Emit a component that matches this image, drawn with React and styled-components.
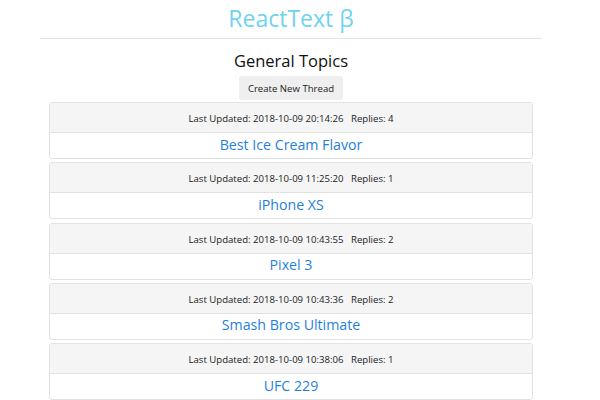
import React from "react";
import styled, { createGlobalStyle } from "styled-components";

const Global = createGlobalStyle`
  html, body { margin: 0; padding: 0; background: #fff; }
  body { font-family: "Segoe UI", "Open Sans", "Noto Sans", sans-serif; color: #212529; }
`;

const Page = styled.div`
  width: 502px;
  margin-left: 40px;
  display: flex;
  flex-direction: column;
  align-items: center;
`;

const Brand = styled.h1`
  margin: 0;
  height: 39px;
  line-height: 36px;
  font-size: 23px;
  font-weight: 400;
  color: #6fd3ee;
  text-align: center;
  width: 100%;
  border-bottom: 1px solid #e4e4e4;
  box-sizing: border-box;
`;

const Heading = styled.h2`
  margin: 9px 0 0;
  font-size: 16.5px;
  font-weight: 400;
  line-height: 26px;
  color: #111;
`;

const Button = styled.button`
  margin-top: 2px;
  border: none;
  border-radius: 3px;
  background: #efefef;
  font-family: inherit;
  font-size: 9.6px;
  color: #222;
  height: 24px;
  padding: 0 9px;
  cursor: pointer;
`;

const List = styled.div`
  width: 484px;
  margin-top: 2px;
  display: flex;
  flex-direction: column;
  gap: 3.25px;
`;

const Card = styled.div`
  border: 1px solid #e2e2e2;
  border-radius: 3px;
  overflow: hidden;
  background: #fff;
`;

const CardHeader = styled.div`
  height: 30px;
  box-sizing: border-box;
  padding-top: 2px;
  background: #f5f5f5;
  border-bottom: 1px solid #e2e2e2;
  display: flex;
  align-items: center;
  justify-content: center;
  font-size: 9.6px;
  color: #222;
  white-space: pre;
`;

const CardBody = styled.div`
  height: 25px;
  box-sizing: border-box;
  padding-bottom: 2px;
  display: flex;
  align-items: center;
  justify-content: center;
`;

const TopicLink = styled.a`
  color: #1f7fe0;
  font-size: 14.2px;
  line-height: 20px;
  text-decoration: none;
`;

const threads = [
  { date: "2018-10-09 20:14:26", replies: 4, title: "Best Ice Cream Flavor" },
  { date: "2018-10-09 11:25:20", replies: 1, title: "iPhone XS" },
  { date: "2018-10-09 10:43:55", replies: 2, title: "Pixel 3" },
  { date: "2018-10-09 10:43:36", replies: 2, title: "Smash Bros Ultimate" },
  { date: "2018-10-09 10:38:06", replies: 1, title: "UFC 229" },
];

export default function App() {
  return (
    <>
      <Global />
      <Page>
        <Brand>ReactText β</Brand>
        <Heading>General Topics</Heading>
        <Button>Create New Thread</Button>
        <List>
          {threads.map((t) => (
            <Card key={t.title}>
              <CardHeader>{`Last Updated: ${t.date}   Replies: ${t.replies}`}</CardHeader>
              <CardBody>
                <TopicLink href="#">{t.title}</TopicLink>
              </CardBody>
            </Card>
          ))}
        </List>
      </Page>
    </>
  );
}
